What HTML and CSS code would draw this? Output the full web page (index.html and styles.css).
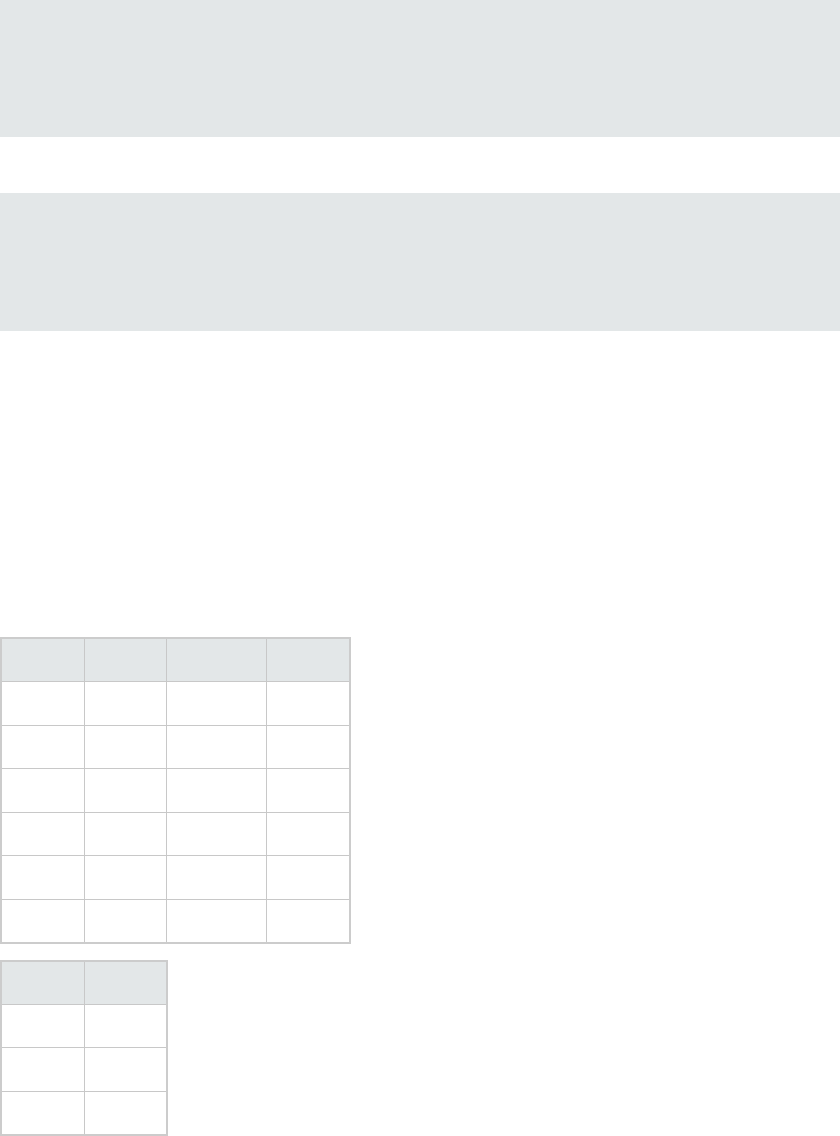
FILE: index.html
```html
<!DOCTYPE html>
<html lang="en">
<head>
<meta charset="utf-8">
<title>Page</title>
<link rel="stylesheet" href="styles.css">
</head>
<body>
  <div class="band band-top"></div>
  <div class="band band-second"></div>
  <main class="content">
    <table class="grid grid-wide">
      <thead>
        <tr><th class="c1"></th><th class="c2"></th><th class="c3"></th><th class="c4"></th></tr>
      </thead>
      <tbody>
        <tr><td></td><td></td><td></td><td></td></tr>
        <tr><td></td><td></td><td></td><td></td></tr>
        <tr><td></td><td></td><td></td><td></td></tr>
        <tr><td></td><td></td><td></td><td></td></tr>
        <tr><td></td><td></td><td></td><td></td></tr>
        <tr><td></td><td></td><td></td><td></td></tr>
      </tbody>
    </table>
    <table class="grid grid-narrow">
      <thead>
        <tr><th class="c1"></th><th class="c2"></th></tr>
      </thead>
      <tbody>
        <tr><td></td><td></td></tr>
        <tr><td></td><td></td></tr>
        <tr><td></td><td></td></tr>
      </tbody>
    </table>
  </main>
</body>
</html>
```

FILE: styles.css
```css
html, body {
  margin: 0;
  padding: 0;
  background: #ffffff;
  font-family: "Liberation Sans", Arial, sans-serif;
}

.band {
  background: #e3e7e8;
}

.band-top {
  height: 137px;
}

.band-second {
  height: 138px;
  margin-top: 56px;
}

.content {
  padding-top: 306px;
  display: flex;
  flex-direction: column;
  align-items: flex-start;
  gap: 16px;
}

.grid {
  border-collapse: collapse;
  border: 2px solid #cccccc;
  table-layout: fixed;
}

.grid th,
.grid td {
  border: 1px solid #c8c8c8;
  padding: 0;
  height: 43.5px;
  box-sizing: border-box;
}

.grid th {
  background: #e3e7e8;
}

.grid-wide {
  width: 349px;
}

.grid-narrow {
  width: 166px;
}

.c1 { width: 83px; }
.c2 { width: 82px; }
.c3 { width: 100px; }
.c4 { width: 84px; }

.grid-narrow .c2 { width: 83px; }
```
